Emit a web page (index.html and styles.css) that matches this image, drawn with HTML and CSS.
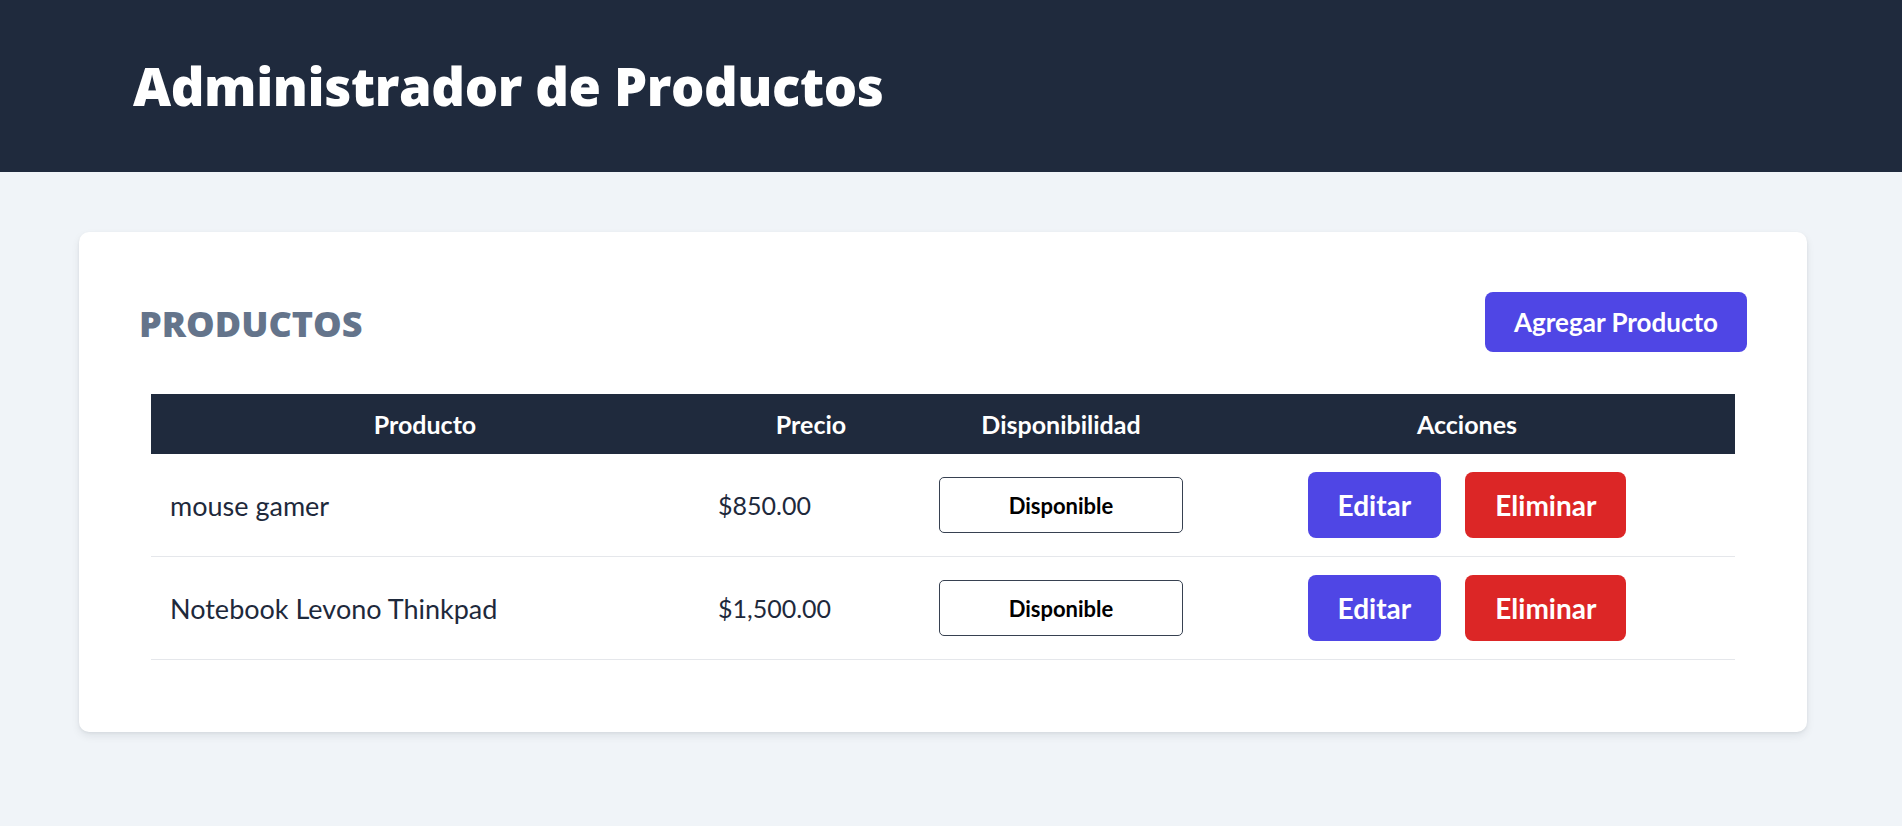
FILE: index.html
```html
<!DOCTYPE html>
<html lang="es">
<head>
<meta charset="utf-8">
<title>Administrador de Productos</title>
<link rel="stylesheet" href="styles.css">
</head>
<body>
<header class="topbar">
  <h1 class="title">Administrador de Productos</h1>
</header>
<main class="main">
  <section class="card">
    <div class="card-head">
      <h2 class="section-title">PRODUCTOS</h2>
      <button class="btn btn-primary btn-add">Agregar Producto</button>
    </div>
    <div class="table-wrap">
      <table class="table">
        <colgroup>
          <col class="col-prod">
          <col class="col-price">
          <col class="col-disp">
          <col class="col-actions">
        </colgroup>
        <thead>
          <tr>
            <th>Producto</th>
            <th>Precio</th>
            <th>Disponibilidad</th>
            <th>Acciones</th>
          </tr>
        </thead>
        <tbody>
          <tr>
            <td class="cell-text">mouse gamer</td>
            <td class="cell-text cell-price">$850.00</td>
            <td class="cell-disp"><button class="status">Disponible</button></td>
            <td class="cell-actions">
              <div class="actions">
                <button class="btn btn-primary btn-row">Editar</button>
                <button class="btn btn-danger btn-row">Eliminar</button>
              </div>
            </td>
          </tr>
          <tr>
            <td class="cell-text">Notebook Levono Thinkpad</td>
            <td class="cell-text cell-price">$1,500.00</td>
            <td class="cell-disp"><button class="status">Disponible</button></td>
            <td class="cell-actions">
              <div class="actions">
                <button class="btn btn-primary btn-row">Editar</button>
                <button class="btn btn-danger btn-row">Eliminar</button>
              </div>
            </td>
          </tr>
        </tbody>
      </table>
    </div>
  </section>
</main>
</body>
</html>
```
FILE: styles.css
```css
* { box-sizing: border-box; }

html, body {
  margin: 0;
  padding: 0;
}

body {
  background: #f0f4f8;
  font-family: Lato, "Noto Sans", "Liberation Sans", sans-serif;
  color: #1e293b;
  min-height: 826px;
}

.topbar {
  background: #1f2a3d;
  height: 172px;
  display: flex;
  align-items: center;
  padding-left: 133px;
}

.title {
  margin: 0;
  color: #ffffff;
  font-family: "Open Sans", "Noto Sans", sans-serif;
  font-size: 52.5px;
  font-weight: 800;
  line-height: 1;
  letter-spacing: -0.4px;
}

.main {
  padding: 60px 0 0 79px;
}

.card {
  width: 1728px;
  background: #ffffff;
  border-radius: 10px;
  box-shadow: 0 4px 8px rgba(15, 23, 42, 0.08), 0 1px 3px rgba(15, 23, 42, 0.06);
  padding: 60px;
}

.card-head {
  display: flex;
  justify-content: space-between;
  align-items: center;
  height: 60px;
  margin-bottom: 30px;
}

.section-title {
  margin: 0;
  font-family: "Open Sans", "Noto Sans", sans-serif;
  font-size: 36px;
  font-weight: 800;
  color: #64748b;
  line-height: 1;
  padding-top: 4px;
}

.btn {
  border: none;
  color: #ffffff;
  font-family: inherit;
  font-weight: 700;
  cursor: pointer;
  display: inline-flex;
  align-items: center;
  justify-content: center;
}

.btn-primary { background: #4f46e5; }
.btn-danger { background: #dc2626; }

.btn-add {
  width: 262px;
  height: 60px;
  border-radius: 8px;
  font-size: 26px;
}

.table-wrap {
  padding: 12px;
}

.table {
  width: 100%;
  border-collapse: collapse;
  table-layout: fixed;
}

.col-prod { width: 548px; }
.col-price { width: 224px; }
.col-disp { width: 276px; }
.col-actions { width: 536px; }

.table th {
  background: #1f2a3d;
  color: #ffffff;
  font-size: 25px;
  font-weight: 700;
  height: 60px;
  padding: 0 16px;
  text-align: center;
}

.table td {
  border-bottom: 1px solid #e5e7eb;
  padding: 18px 16px;
  vertical-align: middle;
}

.cell-text {
  font-size: 27px;
  color: #1e293b;
  padding-left: 19px !important;
}

.cell-price {
  font-size: 25px;
}

.status {
  width: 100%;
  height: 56px;
  background: #ffffff;
  border: 1px solid #374151;
  border-radius: 5px;
  font-family: inherit;
  font-size: 22px;
  font-weight: 700;
  color: #000000;
}

.actions {
  display: flex;
  justify-content: center;
  gap: 24px;
}

.btn-row {
  height: 66px;
  border-radius: 8px;
  font-size: 28px;
  padding: 0 30px;
}
```
